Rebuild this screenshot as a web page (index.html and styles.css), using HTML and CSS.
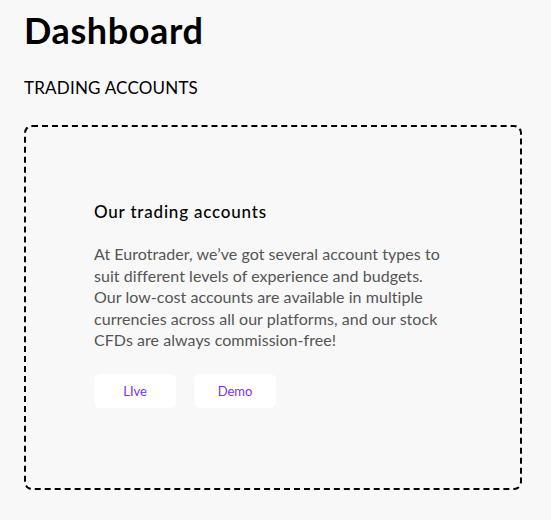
FILE: index.html
```html
<!DOCTYPE html>
<html lang="en">
<head>
<meta charset="utf-8">
<title>Dashboard</title>
<link rel="stylesheet" href="styles.css">
</head>
<body>
<main class="page">
  <h1 class="title">Dashboard</h1>
  <h2 class="section">TRADING ACCOUNTS</h2>
  <section class="card">
    <h3 class="card-title">Our trading accounts</h3>
    <p class="card-text">At Eurotrader, we’ve got several account types to suit different levels of experience and budgets. Our low-cost accounts are available in multiple currencies across all our platforms, and our stock CFDs are always commission-free!</p>
    <div class="actions">
      <button class="btn">LIve</button>
      <button class="btn">Demo</button>
    </div>
  </section>
</main>
</body>
</html>
```
FILE: styles.css
```css
html, body {
  margin: 0;
  background: #f8f8f8;
}
body {
  font-family: "Lato", "Liberation Sans", sans-serif;
  color: #000;
}
.page {
  padding: 9px 29px 0 24px;
}
.title {
  margin: 0;
  font-size: 36px;
  font-weight: 700;
  line-height: 42px;
  letter-spacing: 0.6px;
}
.section {
  margin: 27px 0 0;
  font-size: 17px;
  font-weight: 400;
  line-height: 20px;
  letter-spacing: 0.2px;
}
.card {
  margin-top: 27px;
  border: 2px dashed #000;
  border-radius: 8px;
  padding: 75px 68px 80px;
  height: 365px;
  box-sizing: border-box;
}
.card-title {
  margin: 0;
  font-size: 17px;
  font-weight: 500;
  line-height: 20px;
  letter-spacing: 0.8px;
}
.card-text {
  margin: 21px 0 0;
  font-size: 16px;
  line-height: 21.6px;
  letter-spacing: 0.05px;
  color: #555;
}
.actions {
  display: flex;
  gap: 18px;
  margin-top: 23px;
}
.btn {
  width: 82px;
  height: 34px;
  border: none;
  border-radius: 6px;
  background: #fff;
  color: #7b2ff7;
  font-family: inherit;
  font-size: 13px;
  cursor: pointer;
}
```
